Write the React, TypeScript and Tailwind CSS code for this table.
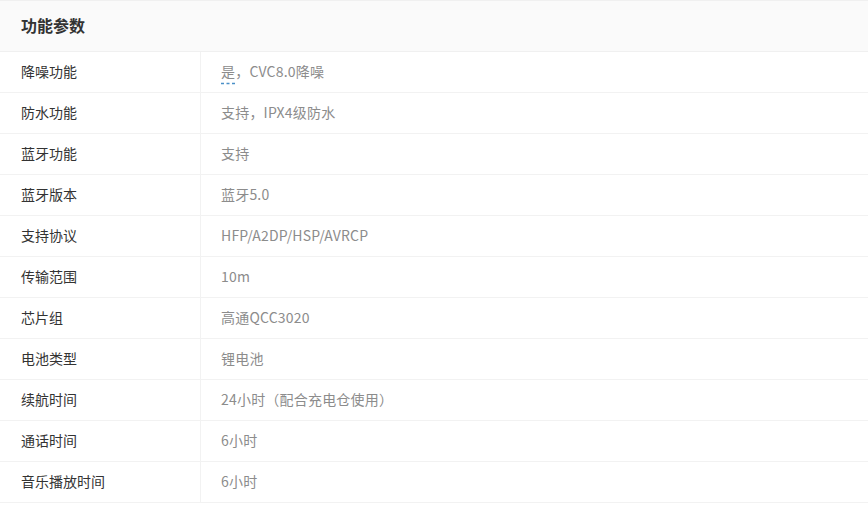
const rows: [string, string][] = [
  ["降噪功能", "是，CVC8.0降噪"],
  ["防水功能", "支持，IPX4级防水"],
  ["蓝牙功能", "支持"],
  ["蓝牙版本", "蓝牙5.0"],
  ["支持协议", "HFP/A2DP/HSP/AVRCP"],
  ["传输范围", "10m"],
  ["芯片组", "高通QCC3020"],
  ["电池类型", "锂电池"],
  ["续航时间", "24小时（配合充电仓使用）"],
  ["通话时间", "6小时"],
  ["音乐播放时间", "6小时"],
];

const App = () => {
  return (
    <div
      className="w-[868px] h-[505px] bg-white overflow-hidden"
      style={{ fontFamily: '"Microsoft YaHei", "Noto Sans CJK SC", sans-serif' }}
    >
      <div className="border-y border-[#f0f0f0] bg-[#fafafa] h-[52px] flex items-center px-[21px] pb-[2px]">
        <h2 className="text-[16px] font-bold text-[#333]">功能参数</h2>
      </div>
      {rows.map(([label, value], i) => (
        <div key={label} className="flex h-[41px] border-b border-[#f2f2f2]">
          <div className="w-[201px] border-r border-[#f2f2f2] flex items-center pl-[21px] pb-[2px] text-[14px] text-[#333]">
            {label}
          </div>
          <div className="flex-1 flex items-center pl-[20px] pb-[2px] text-[14px] text-[#8c8c8c] tracking-[0.2px]">
            {i === 0 ? (
              <>
                <span className="underline decoration-dashed decoration-[#4a90c8] underline-offset-[6px]">是</span>
                {value.slice(1)}
              </>
            ) : (
              value
            )}
          </div>
        </div>
      ))}
    </div>
  );
};

export default App;
